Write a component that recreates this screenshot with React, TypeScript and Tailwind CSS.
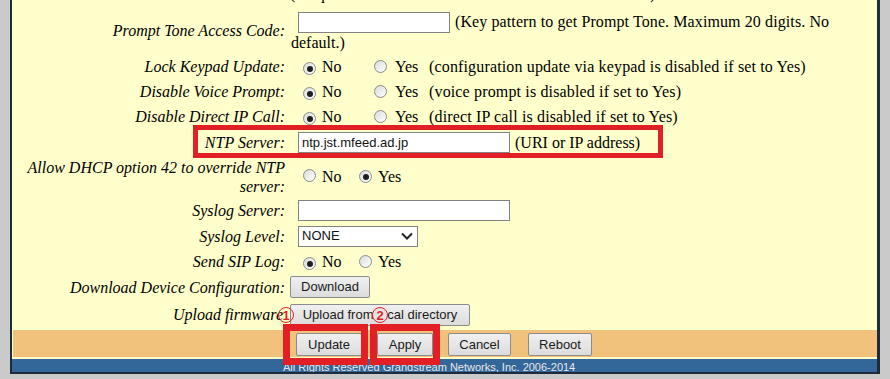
import React from "react";

function Radio({ checked }: { checked?: boolean }) {
  return (
    <span className="inline-flex w-[13px] h-[13px] shrink-0 items-center justify-center rounded-full border border-[#8a8a8a] bg-linear-to-br from-[#dcdcdc] to-[#ffffff]">
      {checked && <span className="w-[6px] h-[6px] rounded-full bg-[#1e1e1e]" />}
    </span>
  );
}

function Row({
  label,
  h,
  children,
}: {
  label?: React.ReactNode;
  h: string;
  children?: React.ReactNode;
}) {
  return (
    <div className={`flex items-center ${h}`}>
      <div className="w-[274px] shrink-0 pr-[1px] text-right italic leading-[19px]">{label}</div>
      <div className="flex items-center pl-[4px]">{children}</div>
    </div>
  );
}

function WideRadios({ desc }: { desc: string }) {
  return (
    <>
      <span className="ml-[13px]"><Radio checked /></span>
      <span className="ml-[6px] w-[52px]">No</span>
      <Radio />
      <span className="ml-[8px] w-[34px]">Yes</span>
      <span className="whitespace-nowrap tracking-[0.15px]">{desc}</span>
    </>
  );
}

function NarrowRadios({ yes }: { yes?: boolean }) {
  return (
    <>
      <span className="ml-[13px]"><Radio checked={!yes} /></span>
      <span className="ml-[6px] w-[37px]">No</span>
      <Radio checked={yes} />
      <span className="ml-[6px]">Yes</span>
    </>
  );
}

const btn =
  "inline-flex items-center justify-center border border-[#8c8c8c] bg-linear-to-b from-[#f0f0f0] to-[#dcdcdc] rounded-[2px] text-[13px] text-[#1a1a1a] font-['Liberation_Sans',Arial,sans-serif]";

const inp =
  "h-[21px] border border-[#828282] bg-white px-[3px] text-[13px] text-[#111] font-['Liberation_Sans',Arial,sans-serif] flex items-center";

export default function App() {
  return (
    <div className="relative w-[890px] h-[379px] overflow-hidden bg-[#cacaca] pl-[10px] font-['Liberation_Serif','Times_New_Roman',serif] text-[16px] text-black">
      <div className="-mt-[16px] w-[870px] border-l-2 border-r-[3px] border-b-2 border-[#1d2b3a] bg-[#ffffcc]">
        <Row h="h-[20px]">
          <span className="whitespace-nowrap">(Frequencies are in Hz and cadence on and off are in ms)</span>
        </Row>
        <div className="flex h-[50px]">
          <div className="w-[274px] shrink-0 pr-[1px] text-right italic self-center mt-[3px]">Prompt Tone Access Code:</div>
          <div className="flex flex-col pl-[4px] pt-[7px]">
            <div className="flex h-[22px] items-center">
              <div className={`${inp} ml-[8px] w-[152px]`} />
              <span className="ml-[5px] whitespace-nowrap tracking-[0.1px]">(Key pattern to get Prompt Tone. Maximum 20 digits. No</span>
            </div>
            <div className="leading-[20px] pl-[1px]">default.)</div>
          </div>
        </div>
        <Row h="h-[25px]" label="Lock Keypad Update:">
          <WideRadios desc="(configuration update via keypad is disabled if set to Yes)" />
        </Row>
        <Row h="h-[25px]" label="Disable Voice Prompt:">
          <WideRadios desc="(voice prompt is disabled if set to Yes)" />
        </Row>
        <Row h="h-[25px]" label="Disable Direct IP Call:">
          <WideRadios desc="(direct IP call is disabled if set to Yes)" />
        </Row>
        <Row h="h-[27px]" label="NTP Server:">
          <div className={`${inp} ml-[8px] w-[212px]`}>ntp.jst.mfeed.ad.jp</div>
          <span className="ml-[5px] whitespace-nowrap">(URI or IP address)</span>
        </Row>
        <Row
          h="h-[41px]"
          label={
            <>
              Allow DHCP option 42 to override NTP
              <br />
              server:
            </>
          }
        >
          <NarrowRadios yes />
        </Row>
        <Row h="h-[27px]" label="Syslog Server:">
          <div className={`${inp} ml-[8px] w-[212px]`} />
        </Row>
        <Row h="h-[24px]" label="Syslog Level:">
          <div className={`${inp} ml-[8px] h-[20px] w-[120px] justify-between`}>
            <span>NONE</span>
            <svg width="12" height="8" viewBox="0 0 12 8" className="mr-[1px]">
              <polyline points="1,1.5 6,6.5 11,1.5" fill="none" stroke="#222" strokeWidth="2" />
            </svg>
          </div>
        </Row>
        <Row h="h-[27px]" label="Send SIP Log:">
          <NarrowRadios />
        </Row>
        <Row h="h-[24px]" label="Download Device Configuration:">
          <button className={`${btn} h-[22px] w-[80px]`}>Download</button>
        </Row>
        <Row h="h-[31px]" label={<span className="mr-[2px]">Upload firmware</span>}>
          <button className={`${btn} h-[22px] w-[180px]`}>Upload from local directory</button>
        </Row>
        <div className="ml-[1px] flex h-[27px] items-start bg-[#f0c27b] pl-[283px] pt-[3px]">
          <button className={`${btn} h-[23px] w-[66px]`}>Update</button>
          <button className={`${btn} ml-[15px] h-[23px] w-[56px]`}>Apply</button>
          <button className={`${btn} ml-[15px] h-[23px] w-[63px]`}>Cancel</button>
          <button className={`${btn} ml-[17px] h-[23px] w-[64px]`}>Reboot</button>
        </div>
        <div className="h-[2px]" />
        <div className="h-[13px] overflow-hidden bg-[#336699] pl-[271px] pt-[2px] text-[11px] leading-[13px] text-[#e8e8e8] font-['Liberation_Sans',Arial,sans-serif] whitespace-nowrap">
          All Rights Reserved Grandstream Networks, Inc. 2006-2014
        </div>
      </div>

      {/* annotations */}
      <div className="absolute left-[193px] top-[125px] h-[33px] w-[470px] border-[5px] border-[#e31f26]" />
      <div className="absolute left-[283px] top-[324px] h-[41px] w-[85px] border-[7px] border-[#e31f26]" />
      <div className="absolute left-[370px] top-[324px] h-[41px] w-[70px] border-[7px] border-[#e31f26]" />
      <div className="absolute left-[278px] top-[307px] flex h-[16px] w-[16px] items-center justify-center rounded-full border border-[#e31f26] text-[13px] font-bold leading-none text-[#e31f26] font-['Liberation_Sans',Arial,sans-serif]">
        1
      </div>
      <div className="absolute left-[372px] top-[307px] flex h-[16px] w-[16px] items-center justify-center rounded-full border border-[#e31f26] bg-[#e4e4e4] text-[13px] font-bold leading-none text-[#e31f26] font-['Liberation_Sans',Arial,sans-serif]">
        2
      </div>
    </div>
  );
}
